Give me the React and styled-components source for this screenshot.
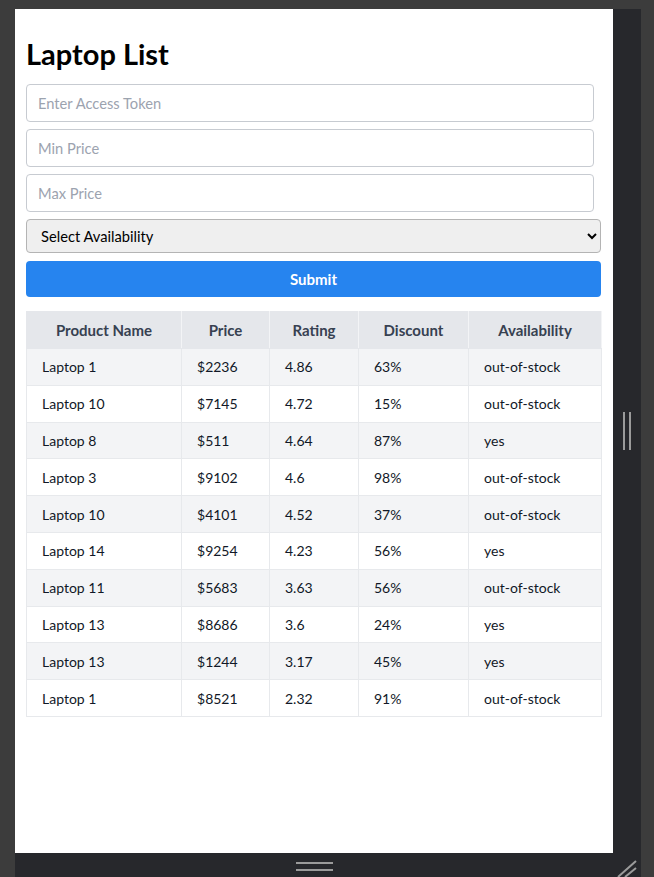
import React from "react";
import styled, { createGlobalStyle } from "styled-components";

const GlobalStyle = createGlobalStyle`
  html, body {
    margin: 0;
    padding: 0;
    background: #3c3c3c;
  }
  * {
    box-sizing: border-box;
  }
`;

const Outer = styled.div`
  width: 654px;
  height: 877px;
  padding: 9px 13px 0 15px;
  background: #3c3c3c;
  overflow: hidden;
`;

const Device = styled.div`
  display: grid;
  grid-template-columns: 598px 28px;
  grid-template-rows: 844px 24px;
  background: #27282c;
`;

const Viewport = styled.div`
  background: #ffffff;
  padding: 0 12px 0 11px;
  font-family: "Lato", "Open Sans", sans-serif;
  overflow: hidden;
`;

const SideBar = styled.div`
  display: flex;
  align-items: center;
  justify-content: center;
  gap: 4px;
  padding-right: 1px;
`;

const VGrip = styled.span`
  width: 2px;
  height: 38px;
  background: #9b9b9b;
`;

const BottomBar = styled.div`
  display: flex;
  flex-direction: column;
  align-items: center;
  justify-content: center;
  gap: 5px;
  padding-top: 2px;
`;

const HGrip = styled.span`
  width: 37px;
  height: 2px;
  background: #9b9b9b;
`;

const Corner = styled.div`
  display: flex;
`;

const Title = styled.h1`
  margin: 27px 0 13px;
  font-size: 29px;
  line-height: 35px;
  font-weight: 700;
  color: #000;
`;

const Form = styled.form`
  display: flex;
  flex-direction: column;
  gap: 7px;
`;

const Input = styled.input`
  width: 568px;
  height: 38px;
  padding: 0 11px;
  border: 1px solid #c7cbd1;
  border-radius: 4px;
  font-family: inherit;
  font-size: 14.7px;
  color: #111827;
  outline: none;

  &::placeholder {
    color: #9ca3af;
  }
`;

const Select = styled.select`
  width: 575px;
  height: 34px;
  padding: 0 10px;
  border: 1px solid #b4b4b4;
  border-radius: 4px;
  background: #efefef;
  font-family: inherit;
  font-size: 14.7px;
  color: #000;
`;

const Button = styled.button`
  width: 575px;
  height: 36px;
  margin-top: 1px;
  border: none;
  border-radius: 4px;
  background: #2684ef;
  color: #fff;
  font-family: inherit;
  font-size: 15px;
  font-weight: 700;
`;

const Table = styled.table`
  margin-top: 14px;
  width: 575px;
  table-layout: fixed;
  border-collapse: collapse;
  font-size: 14px;
`;

const Th = styled.th`
  height: 37px;
  padding: 0 15px;
  background: #e5e7eb;
  border: 1px solid #e5e7eb;
  border-right-color: #f3f4f6;
  color: #374151;
  font-size: 15px;
  font-weight: 700;
  text-align: center;
`;

const Row = styled.tr`
  background: ${(p) => (p.$striped ? "#f3f4f6" : "#ffffff")};
`;

const Td = styled.td`
  height: 36.8px;
  padding: 0 15px;
  border: 1px solid #e7e9ec;
  color: #111827;
  text-align: left;
`;

const columns = [
  { label: "Product Name", width: 155 },
  { label: "Price", width: 88 },
  { label: "Rating", width: 89 },
  { label: "Discount", width: 110 },
  { label: "Availability", width: 133 },
];

const laptops = [
  ["Laptop 1", 2236, 4.86, 63, "out-of-stock"],
  ["Laptop 10", 7145, 4.72, 15, "out-of-stock"],
  ["Laptop 8", 511, 4.64, 87, "yes"],
  ["Laptop 3", 9102, 4.6, 98, "out-of-stock"],
  ["Laptop 10", 4101, 4.52, 37, "out-of-stock"],
  ["Laptop 14", 9254, 4.23, 56, "yes"],
  ["Laptop 11", 5683, 3.63, 56, "out-of-stock"],
  ["Laptop 13", 8686, 3.6, 24, "yes"],
  ["Laptop 13", 1244, 3.17, 45, "yes"],
  ["Laptop 1", 8521, 2.32, 91, "out-of-stock"],
];

const App = () => {
  return (
    <>
      <GlobalStyle />
      <Outer>
        <Device>
          <Viewport>
            <Title>Laptop List</Title>
            <Form onSubmit={(e) => e.preventDefault()}>
              <Input placeholder="Enter Access Token" />
              <Input placeholder="Min Price" />
              <Input placeholder="Max Price" />
              <Select defaultValue="">
                <option value="">Select Availability</option>
                <option value="yes">yes</option>
                <option value="out-of-stock">out-of-stock</option>
              </Select>
              <Button type="submit">Submit</Button>
            </Form>
            <Table>
              <colgroup>
                {columns.map((c) => (
                  <col key={c.label} style={{ width: c.width }} />
                ))}
              </colgroup>
              <thead>
                <tr>
                  {columns.map((c) => (
                    <Th key={c.label}>{c.label}</Th>
                  ))}
                </tr>
              </thead>
              <tbody>
                {laptops.map(([name, price, rating, discount, avail], i) => (
                  <Row key={i} $striped={i % 2 === 0}>
                    <Td>{name}</Td>
                    <Td>${price}</Td>
                    <Td>{rating}</Td>
                    <Td>{discount}%</Td>
                    <Td>{avail}</Td>
                  </Row>
                ))}
              </tbody>
            </Table>
          </Viewport>
          <SideBar>
            <VGrip />
            <VGrip />
          </SideBar>
          <BottomBar>
            <HGrip />
            <HGrip />
          </BottomBar>
          <Corner>
            <svg width="28" height="24" viewBox="0 0 28 24">
              <path
                d="M5 24 L23 8 M12 24 L23 15"
                stroke="#9b9b9b"
                strokeWidth="2"
                fill="none"
              />
            </svg>
          </Corner>
        </Device>
      </Outer>
    </>
  );
};

export default App;
